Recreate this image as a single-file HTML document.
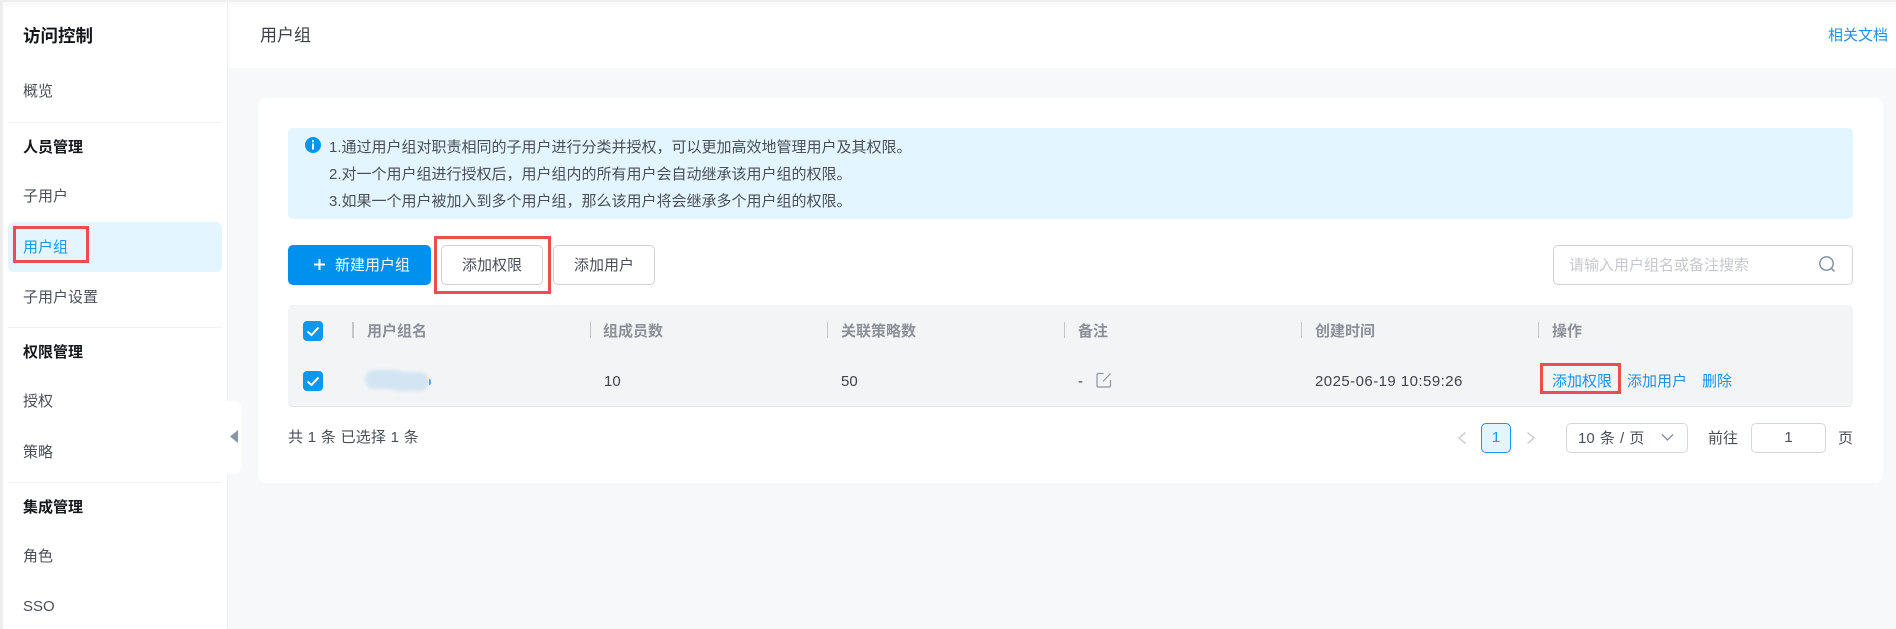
<!DOCTYPE html>
<html lang="zh">
<head>
<meta charset="utf-8">
<style>
html,body{margin:0;padding:0;width:1896px;height:629px;overflow:hidden;background:#fff;}
body{position:relative;font-family:"Liberation Sans","Noto Sans CJK SC",sans-serif;font-size:15px;color:#4a4f59;}
.a{position:absolute;}
.t{position:absolute;white-space:nowrap;line-height:24px;height:24px;margin-top:1px;}
.h{font-weight:700;color:#14171c;}
.div{position:absolute;left:8px;width:214px;height:1px;background:#f0f1f3;}
.red{position:absolute;border:3px solid #e85050;box-sizing:border-box;}
.btn{position:absolute;top:245px;height:40px;box-sizing:border-box;border:1px solid #cfd3d9;border-radius:5px;background:#fff;text-align:center;line-height:40px;color:#4a4f59;}
.th{position:absolute;top:320px;line-height:24px;font-weight:700;color:#8c9099;white-space:nowrap;font-size:15px;}
.sep{position:absolute;top:322px;width:1px;height:16px;background:#c4c6ca;}
.td{position:absolute;top:370px;line-height:24px;white-space:nowrap;color:#3f444d;}
.lnk{color:#1a92ec;}
.cb{position:absolute;left:303px;width:20px;height:20px;border-radius:4px;background:#0a98f1;}
.box{position:absolute;top:423px;height:30px;box-sizing:border-box;border:1px solid #d3d6db;border-radius:5px;background:#fff;}
</style>
</head>
<body>
<!-- page background -->
<div class="a" style="left:228px;top:68px;width:1668px;height:561px;background:#f7f8fa;"></div>
<div class="a" style="left:0;top:0;width:1896px;height:2px;background:#efefef;"></div>
<div class="a" style="left:0;top:2px;width:1896px;height:6px;background:linear-gradient(#f8f8f8,#fff);"></div>
<div class="a" style="left:0;top:0;width:3px;height:629px;background:#eeeeee;"></div>
<div class="a" style="left:227px;top:2px;width:1px;height:627px;background:#eef0f2;"></div>

<!-- sidebar -->
<div class="t" style="left:23px;top:23px;font-size:17.5px;font-weight:700;color:#14171c;">访问控制</div>
<div class="t" style="left:23px;top:79px;">概览</div>
<div class="div" style="top:122px;"></div>
<div class="t h" style="left:23px;top:135px;">人员管理</div>
<div class="t" style="left:23px;top:184px;">子用户</div>
<div class="a" style="left:8px;top:222px;width:214px;height:50px;border-radius:6px;background:#e3f5fe;"></div>
<div class="t" style="left:23px;top:235px;color:#1a96ee;">用户组</div>
<div class="red" style="left:13px;top:226px;width:76px;height:37px;"></div>
<div class="t" style="left:23px;top:285px;">子用户设置</div>
<div class="div" style="top:327px;"></div>
<div class="t h" style="left:23px;top:340px;">权限管理</div>
<div class="t" style="left:23px;top:389px;">授权</div>
<div class="t" style="left:23px;top:440px;">策略</div>
<div class="div" style="top:482px;"></div>
<div class="t h" style="left:23px;top:495px;">集成管理</div>
<div class="t" style="left:23px;top:544px;">角色</div>
<div class="t" style="left:23px;top:594px;">SSO</div>

<!-- collapse tab -->
<div class="a" style="left:227px;top:401px;width:15px;height:73px;background:#fff;border-radius:0 8px 8px 0;"></div>
<svg class="a" style="left:229px;top:429px;" width="10" height="15" viewBox="0 0 10 15"><path d="M9 1V14L1 7.5Z" fill="#8a96a6"/></svg>

<!-- header -->
<div class="t" style="left:260px;top:23px;font-size:17px;color:#3a3f48;">用户组</div>
<div class="t lnk" style="left:1828px;top:23px;font-size:15px;color:#1a92ec;">相关文档</div>

<!-- card -->
<div class="a" style="left:258px;top:98px;width:1625px;height:385px;background:#fff;border-radius:8px;"></div>

<!-- notice -->
<div class="a" style="left:288px;top:128px;width:1565px;height:91px;background:#e3f5fe;border-radius:5px;"></div>
<svg class="a" style="left:305px;top:137px;" width="16" height="16" viewBox="0 0 16 16"><circle cx="8" cy="8" r="8" fill="#0a94ee"/><rect x="7" y="3.200" width="2" height="2" fill="#fff"/><rect x="7" y="6.500" width="2" height="6" fill="#fff"/></svg>
<div class="t" style="left:329px;top:135px;">1.通过用户组对职责相同的子用户进行分类并授权，可以更加高效地管理用户及其权限。</div>
<div class="t" style="left:329px;top:162px;">2.对一个用户组进行授权后，用户组内的所有用户会自动继承该用户组的权限。</div>
<div class="t" style="left:329px;top:189px;">3.如果一个用户被加入到多个用户组，那么该用户将会继承多个用户组的权限。</div>

<!-- toolbar -->
<div class="a" style="left:288px;top:245px;width:143px;height:40px;background:#0091ee;border-radius:5px;"></div>
<svg class="a" style="left:313px;top:258px;" width="13" height="13" viewBox="0 0 13 13"><path d="M6.500 1V12M1 6.500H12" stroke="#fff" stroke-width="2"/></svg>
<div class="t" style="left:335px;top:253px;color:#fff;">新建用户组</div>
<div class="btn" style="left:441px;width:102px;">添加权限</div>
<div class="red" style="left:434px;top:236px;width:117px;height:58px;"></div>
<div class="btn" style="left:553px;width:102px;">添加用户</div>
<div class="a" style="left:1553px;top:245px;width:300px;height:40px;box-sizing:border-box;border:1px solid #cfd3d9;border-radius:5px;background:#fff;"></div>
<div class="t" style="left:1569px;top:253px;color:#c5c8ce;">请输入用户组名或备注搜索</div>
<svg class="a" style="left:1818px;top:255px;" width="18" height="18" viewBox="0 0 18 18"><circle cx="8.500" cy="8.500" r="6.700" fill="none" stroke="#7e8b9b" stroke-width="1.400"/><path d="M13.500 13.500L16.500 16.500" stroke="#7e8b9b" stroke-width="1.400"/></svg>

<!-- table -->
<div class="a" style="left:288px;top:305px;width:1565px;height:102px;box-sizing:border-box;background:#f3f4f6;border-radius:5px;border-bottom:1px solid #e2e4e7;"></div>
<div class="cb" style="top:321px;"></div>
<svg class="a" style="left:303px;top:321px;" width="20" height="20" viewBox="0 0 20 20"><path d="M4.500 10.500L8.500 14L15.500 6.500" fill="none" stroke="#fff" stroke-width="2"/></svg>
<div class="cb" style="top:371px;"></div>
<svg class="a" style="left:303px;top:371px;" width="20" height="20" viewBox="0 0 20 20"><path d="M4.500 10.500L8.500 14L15.500 6.500" fill="none" stroke="#fff" stroke-width="2"/></svg>

<div class="sep" style="left:352px;width:2px;"></div><div class="th" style="left:367px;">用户组名</div>
<div class="sep" style="left:590px;"></div><div class="th" style="left:603px;">组成员数</div>
<div class="sep" style="left:827px;"></div><div class="th" style="left:841px;">关联策略数</div>
<div class="sep" style="left:1064px;"></div><div class="th" style="left:1078px;">备注</div>
<div class="sep" style="left:1301px;"></div><div class="th" style="left:1315px;">创建时间</div>
<div class="sep" style="left:1538px;"></div><div class="th" style="left:1552px;">操作</div>

<div class="a" style="left:365px;top:370px;width:40px;height:19px;border-radius:10px;background:#d3e5f2;filter:blur(1.500px);"></div>
<div class="a" style="left:390px;top:372px;width:39px;height:19px;border-radius:10px;background:#d3e5f2;filter:blur(1.500px);"></div>
<div class="a" style="left:429px;top:379px;width:2px;height:6px;border-radius:0 3px 3px 0;background:#4aa8ee;"></div>
<div class="td" style="left:604px;">10</div>
<div class="td" style="left:841px;">50</div>
<div class="td" style="left:1078px;">-</div>
<svg class="a" style="left:1095px;top:371px;" width="18" height="18" viewBox="0 0 18 18"><path d="M8.500 2.500H3.500Q2 2.500 2 4V14.500Q2 16 3.500 16H14Q15.500 16 15.500 14.500V9M8 10.500L15.500 2.500" fill="none" stroke="#8f96a1" stroke-width="1.200"/></svg>
<div class="td" style="left:1315px;letter-spacing:.45px;">2025-06-19 10:59:26</div>
<div class="td lnk" style="left:1552px;">添加权限</div>
<div class="td lnk" style="left:1627px;">添加用户</div>
<div class="td lnk" style="left:1702px;">删除</div>
<div class="red" style="left:1540px;top:363px;width:81px;height:31px;"></div>

<!-- footer -->
<div class="t" style="left:288px;top:425px;word-spacing:.4px;letter-spacing:.1px;">共 1 条 已选择 1 条</div>
<svg class="a" style="left:1457px;top:430px;" width="10" height="16" viewBox="0 0 10 16"><path d="M8.500 2.500L2 8L8.500 13.500" fill="none" stroke="#c4c8cf" stroke-width="1.300"/></svg>
<div class="a" style="left:1481px;top:423px;width:30px;height:30px;box-sizing:border-box;border:1px solid #1a96ee;border-radius:5px;background:#e3f5fe;color:#1a96ee;text-align:center;line-height:28px;">1</div>
<svg class="a" style="left:1526px;top:430px;" width="10" height="16" viewBox="0 0 10 16"><path d="M1.500 2.500L8 8L1.500 13.500" fill="none" stroke="#c4c8cf" stroke-width="1.300"/></svg>
<div class="box" style="left:1566px;width:122px;"></div>
<div class="t" style="left:1578px;top:426px;word-spacing:1px;">10 条 / 页</div>
<svg class="a" style="left:1661px;top:433px;" width="13" height="9" viewBox="0 0 13 9"><path d="M1 1.500L6.500 7L12 1.500" fill="none" stroke="#7e8b9b" stroke-width="1.300"/></svg>
<div class="t" style="left:1708px;top:426px;">前往</div>
<div class="box" style="left:1751px;width:75px;text-align:center;line-height:28px;">1</div>
<div class="t" style="left:1838px;top:426px;">页</div>
</body>
</html>
